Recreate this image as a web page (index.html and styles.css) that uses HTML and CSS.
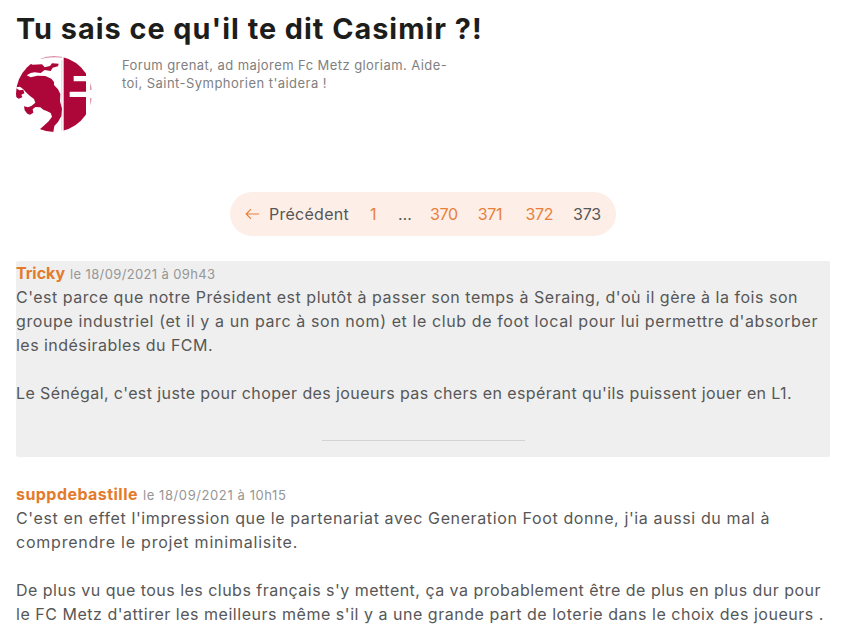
FILE: index.html
```
<!DOCTYPE html>
<html lang="fr">
<head>
<meta charset="utf-8">
<title>Tu sais ce qu'il te dit Casimir ?!</title>
<link rel="stylesheet" href="styles.css">
</head>
<body>
<header>
  <h1>Tu sais ce qu'il te dit Casimir ?!</h1>
  <div class="intro">
    <svg class="crest" viewBox="48 48 228 228" aria-hidden="true">
      <defs><clipPath id="round"><circle cx="162" cy="162" r="114"/></clipPath></defs>
      <g clip-path="url(#round)">
        <rect x="48" y="48" width="228" height="228" fill="#fff"/>
        <g fill="#ad0639">
          <path d="M191 48H258V108H221V124H258V155H209V171H258V276H191Z"/>
          <path d="M270 126H276V150H270ZM270 174H276V200H270Z" opacity=".4"/>
          <path d="M120 48H186V53Q150 50 122 57Z" opacity=".45"/>
          <path d="M184 60H187V276H184Z" opacity=".2"/>
          <path d="M48 142V90L80 66L98 74L126 73L134 82L150 78L156 70L176 71L174 79L158 83L152 93L134 90L122 99L104 97L92 99L80 106L92 112L112 107L136 108L154 116L162 126L162 135L174 148L181 162L180 184L186 206L184 228L174 246L163 258L160 276H110L128 260L146 244L156 230L152 219L140 213L130 209L121 202L106 201L98 208L100 218L90 224L82 221L74 211L72 199L84 202L94 198L106 188L102 177L90 168L78 157L70 148L60 140Z"/>
          <path d="M48 144L58 151L70 149L73 160L64 164L67 172L56 176L48 171Z"/>
        </g>
      </g>
    </svg>
    <p><span class="d1">Forum grenat, ad majorem Fc Metz gloriam. Aide-</span><br><span class="d2">toi, Saint-Symphorien t'aidera !</span></p>
  </div>
</header>

<nav class="pager">
  <a class="prev" href="#"><svg width="14" height="12" viewBox="0 0 14 12" aria-hidden="true"><path d="M14 6H1.2M6 1.2L1.2 6L6 10.8"/></svg><span>Précédent</span></a>
  <a class="first" href="#">1</a>
  <span class="dots">…</span>
  <a href="#">370</a>
  <a href="#">371</a>
  <a href="#">372</a>
  <span class="current">373</span>
</nav>

<main>
  <article class="shaded">
    <div class="byline"><b class="n1">Tricky</b><time class="t1">le 18/09/2021 à 09h43</time></div>
    <p><span class="a1">C'est parce que notre Président est plutôt à passer son temps à Seraing, d'où il gère à la fois son</span><br><span class="a2">groupe industriel (et il y a un parc à son nom) et le club de foot local pour lui permettre d'absorber</span><br><span class="a3">les indésirables du FCM.</span></p>
    <p><span class="a4">Le Sénégal, c'est juste pour choper des joueurs pas chers en espérant qu'ils puissent jouer en L1.</span></p>
    <hr>
  </article>
  <article>
    <div class="byline"><b class="n2">suppdebastille</b><time class="t2">le 18/09/2021 à 10h15</time></div>
    <p><span class="b1">C'est en effet l'impression que le partenariat avec Generation Foot donne, j'ia aussi du mal à</span><br><span class="b2">comprendre le projet minimalisite.</span></p>
    <p><span class="b3">De plus vu que tous les clubs français s'y mettent, ça va probablement être de plus en plus dur pour</span><br><span class="b4">le FC Metz d'attirer les meilleurs même s'il y a une grande part de loterie dans le choix des joueurs .</span></p>
  </article>
</main>
</body>
</html>
```
FILE: styles.css
```
* { box-sizing: border-box; }
html { overflow: hidden; }
body {
  margin: 0;
  padding: 10px 14px 0 16px;
  background: #fff;
  color: #575757;
  font: 16px/24px Inter, "Liberation Sans", sans-serif;
  white-space: nowrap;
}
h1 {
  margin: 0;
  font-size: 28.8px;
  line-height: 38px;
  letter-spacing: 1px;
  color: #1d1d1b;
}
.intro { display: flex; gap: 30px; height: 144px; padding-top: 8px; }
.crest { width: 76px; height: 76px; flex: none; }
.intro p {
  margin: 0;
  font-size: 13px;
  line-height: 18px;
  color: #808080;
}
.d1 { letter-spacing: .43px; }
.d2 { letter-spacing: .46px; }

.pager {
  display: flex;
  align-items: center;
  width: 386px;
  height: 44px;
  margin: 0 0 25px 214px;
  padding-left: 15px;
  border-radius: 22px;
  background: #fdefe7;
}
.pager a { color: #e8803a; text-decoration: none; }
.pager > * { width: 47.7px; letter-spacing: -.3px; }
.pager .prev { display: flex; align-items: center; gap: 10px; width: 125px; color: #575757; letter-spacing: .27px; }
.prev svg { fill: none; stroke: #e8803a; stroke-width: 1.2; }
.pager .first { width: 28px; }
.pager .dots { width: 32px; }
.pager .current { width: auto; }

article { margin-bottom: 25px; }
.shaded { height: 196px; border-radius: 2px; background: #efefef; }
.byline { height: 24px; }
article p { margin: 0 0 24px; }
b { margin-right: 5px; color: #e37b2c; }
time { font-size: 13px; color: #969696; }
hr { width: 203px; margin: 35px auto 0 306px; border: 0; border-top: 1px solid #d3d3d3; }

.n1 { letter-spacing: -.03px; }
.n2 { letter-spacing: .45px; }
.t1 { letter-spacing: .37px; }
.t2 { letter-spacing: .59px; }
.a1 { letter-spacing: .514px; }
.a2 { letter-spacing: .599px; }
.a3 { letter-spacing: .465px; }
.a4 { letter-spacing: .402px; }
.b1 { letter-spacing: .616px; }
.b2 { letter-spacing: .778px; }
.b3 { letter-spacing: .478px; }
.b4 { letter-spacing: .524px; }
```
